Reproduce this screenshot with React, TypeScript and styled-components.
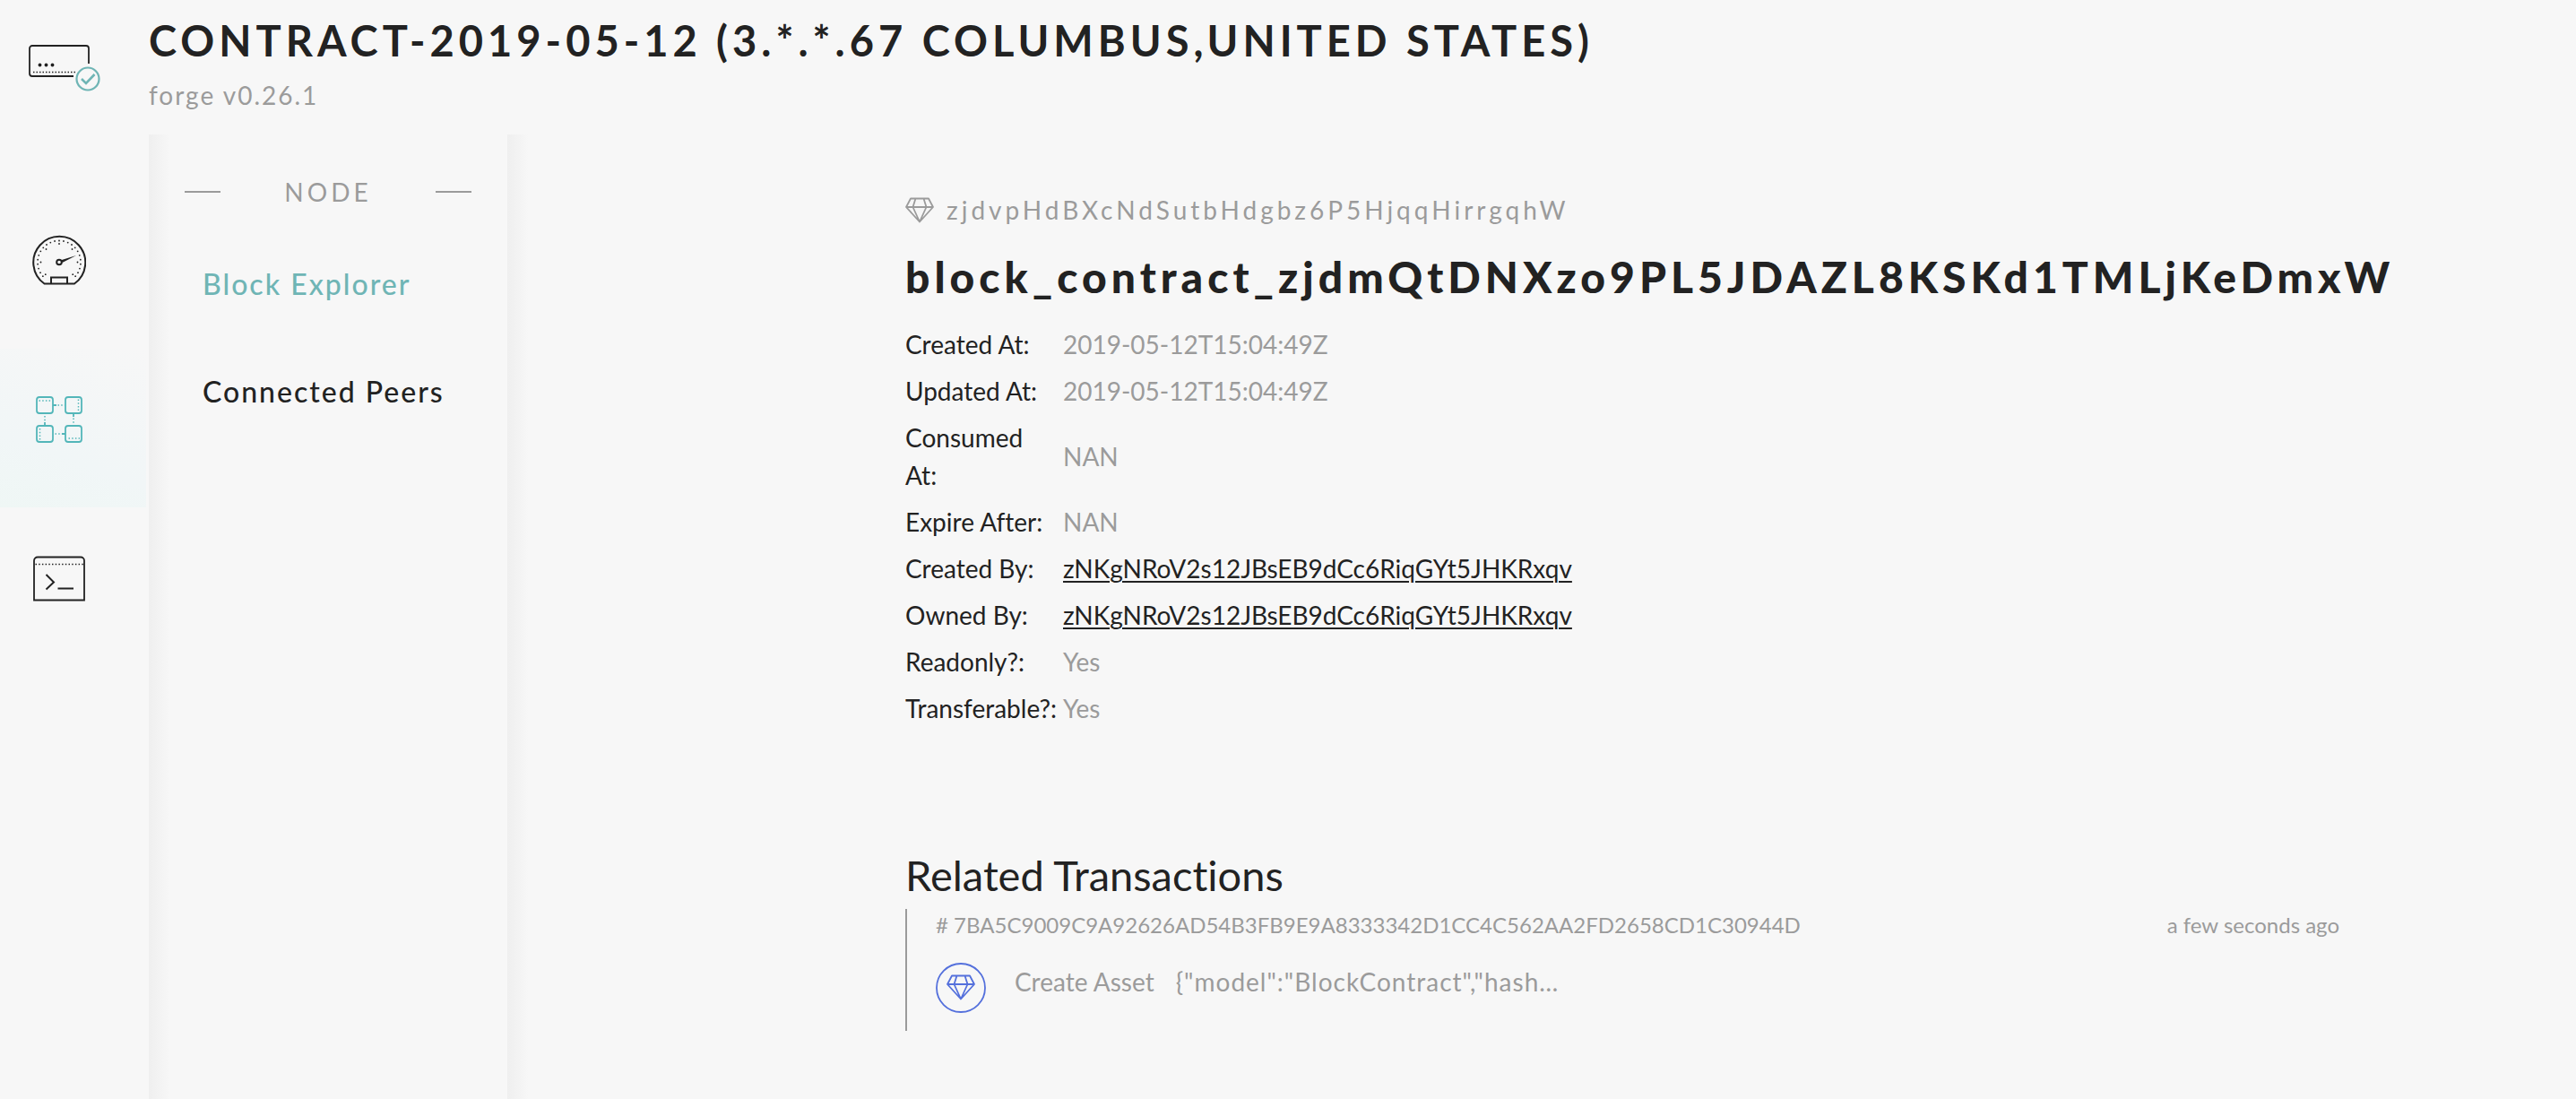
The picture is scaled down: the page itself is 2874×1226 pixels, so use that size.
import React from "react";
import styled, { createGlobalStyle } from "styled-components";

const ink = "#222222";
const muted = "#9b9b9b";
const teal = "#6fb5b5";
const page = "#f7f7f7";

const GlobalStyle = createGlobalStyle`
  *, *::before, *::after { box-sizing: border-box; }
  body {
    margin: 0;
    background: ${page};
    color: ${ink};
    font-family: Lato, "Liberation Sans", sans-serif;
    font-size: 28px;
    line-height: 42px;
    font-variant-ligatures: none;
  }
  h1, h2, h3, p, dl, dd, ul { margin: 0; padding: 0; font-weight: inherit; }
  ul { list-style: none; }
  a { color: inherit; text-decoration: none; }
`;

const Shell = styled.div`
  display: grid;
  grid-template-columns: 166px minmax(0, 1fr);
  grid-template-rows: 150px 1fr;
  min-height: 100vh;
`;

const Brand = styled.a`
  padding: 48px 0 0 31px;
  svg { display: block; }
`;

const Header = styled.header`
  padding-top: 15px;
`;

const PageTitle = styled.h1`
  font-size: 47px;
  line-height: 60px;
  font-weight: 700;
  letter-spacing: 5px;
  text-transform: uppercase;
  white-space: nowrap;
`;

const Version = styled.p`
  margin-top: 10px;
  color: ${muted};
  letter-spacing: 2px;
`;

const Rail = styled.nav`
  padding-top: 62px;
`;

const RailLink = styled.a<{ $active?: boolean }>`
  display: block;
  height: 177px;
  margin-right: 3px;
  padding: 48px 0 0 36px;
  color: ${(p) => (p.$active ? "#53b6b9" : ink)};
  background: ${(p) =>
    p.$active ? "linear-gradient(20deg, #eff7f5, #f1f6f7 35%, #f7f7f7)" : "none"};
  svg { display: block; }
`;

const Body = styled.div`
  display: grid;
  grid-template-columns: 400px minmax(0, 1fr);
`;

const shade = "linear-gradient(to right, #efefef, #f7f7f7) no-repeat left / 24px 100%";

const Menu = styled.nav`
  padding: 43px 40px 0;
  background: ${shade};
`;

const MenuTitle = styled.h2`
  display: flex;
  align-items: center;
  justify-content: space-between;
  color: ${muted};
  font-size: 28px;
  letter-spacing: 4px;
  &::before, &::after {
    content: "";
    width: 40px;
    height: 2px;
    background: ${muted};
  }
`;

const MenuLink = styled.a<{ $active?: boolean }>`
  display: block;
  padding: 36px 20px;
  font-size: 32px;
  line-height: 48px;
  font-weight: 500;
  letter-spacing: 2px;
  white-space: nowrap;
  color: ${(p) => (p.$active ? teal : ink)};
`;

const MenuList = styled.ul`
  padding-top: 22px;
`;

const Main = styled.main`
  display: flex;
  justify-content: center;
  padding: 63px 0 0 180px;
  background: ${shade};
`;

const Content = styled.article`
  width: 100%;
  max-width: 1600px;
`;

const Address = styled.p`
  display: flex;
  align-items: center;
  gap: 14px;
  color: ${muted};
  letter-spacing: 4px;
`;

const AssetName = styled.h2`
  margin: 24px 0;
  font-size: 48px;
  line-height: 60px;
  font-weight: 900;
  letter-spacing: 5px;
  white-space: nowrap;
`;

const Facts = styled.dl`
  display: flex;
  flex-direction: column;
  gap: 10px;
`;

const Fact = styled.div`
  display: flex;
  align-items: center;
`;

const Term = styled.dt`
  flex: none;
  width: 176px;
  padding-right: 8px;
`;

const Value = styled.dd`
  color: ${muted};
`;

const AccountLink = styled.a`
  color: ${ink};
  text-decoration: underline;
  text-decoration-thickness: 2px;
  text-underline-offset: 3px;
`;

const SectionTitle = styled.h3`
  margin: 135px 0 8px;
  font-size: 47px;
  line-height: 60px;
`;

const Transaction = styled.section`
  height: 136px;
  padding-left: 32px;
  border-left: 2px solid ${muted};
  color: ${muted};
`;

const TransactionHead = styled.div`
  display: flex;
  justify-content: space-between;
  font-size: 24px;
  line-height: 36px;
`;

const TransactionBody = styled.div`
  display: flex;
  gap: 32px;
  margin-top: 24px;
  svg { flex: none; }
`;

const Kind = styled.span`
  margin-right: 24px;
`;

const Payload = styled.span`
  letter-spacing: 1px;
`;

const gemPath = "M6 1.5H26L31 11L16 27.5L1 11ZM1 11H31M11.500 1.500L8.500 11L16 27.500L23.500 11L20.500 1.500";

const GemIcon = () => (
  <svg width="32" height="29" viewBox="0 0 32 29" fill="none" stroke="currentColor" strokeWidth="1.800" strokeLinejoin="round" aria-hidden="true">
    <path d={gemPath} />
  </svg>
);

const GemBadge = () => (
  <svg width="56" height="56" viewBox="0 0 56 56" fill="none" stroke="#5470dc" strokeWidth="1.800" strokeLinejoin="round" aria-hidden="true">
    <circle cx="28" cy="28" r="27" />
    <path d={gemPath} transform="translate(12 13)" />
  </svg>
);

const NodeLogo = () => (
  <svg width="82" height="56" viewBox="0 0 82 56" fill="none" strokeWidth="1.8" aria-hidden="true">
    <path d="M68 23V6a3 3 0 0 0-3-3H5a3 3 0 0 0-3 3v28a3 3 0 0 0 3 3h46" stroke={ink} />
    <g fill={ink}>
      <circle cx="13.500" cy="24.500" r="1.900" />
      <circle cx="20.500" cy="24.500" r="1.900" />
      <circle cx="27.500" cy="24.500" r="1.900" />
    </g>
    <path d="M6 32.500H53" stroke={ink} strokeWidth="1.500" strokeDasharray="1.500 2" />
    <circle cx="67" cy="40" r="12.500" stroke={teal} strokeWidth="2.200" />
    <path d="M60 40l5 5 9.500-10" stroke={teal} strokeWidth="2.600" />
  </svg>
);

const ticks = Array.from({ length: 23 }, (_, i) => ((i - 11) * 11.9 * Math.PI) / 180);
const innerTicks = [-132, -90, -45, 0, 45, 90, 132].map((d) => (d * Math.PI) / 180);

const GaugeIcon = () => (
  <svg width="60" height="60" viewBox="0 0 60 60" fill="none" stroke="currentColor" strokeWidth="2" aria-hidden="true">
    <path d="M13.500 56.500A29 29 0 1 1 47 56.500Z" strokeLinejoin="round" />
    <path d="M21 56V49.500H39V56" />
    <circle cx="30" cy="32.500" r="2.800" />
    <path d="M32 30.200L49 25L33.500 33Z" fill="currentColor" stroke="none" />
    <g fill="currentColor" stroke="none">
      {ticks.map((a) => (
        <circle key={a} cx={30 + 24 * Math.sin(a)} cy={32.5 - 24 * Math.cos(a)} r="0.900" />
      ))}
      {innerTicks.map((a) => (
        <circle key={a} cx={30 + 20.5 * Math.sin(a)} cy={32.5 - 20.5 * Math.cos(a)} r="0.900" />
      ))}
    </g>
  </svg>
);

const BlocksIcon = () => (
  <svg width="60" height="60" viewBox="0 0 60 60" fill="none" stroke="currentColor" strokeWidth="1.800" aria-hidden="true">
    <rect x="5" y="6" width="18" height="18" rx="3" />
    <rect x="37" y="6" width="18" height="18" rx="3" />
    <rect x="5" y="38" width="18" height="18" rx="3" />
    <rect x="37" y="38" width="18" height="18" rx="3" />
    <path d="M23 15H27M46 24V28M14 38V34M37 47H33" />
    <path
      d="M28.500 15H36M46 29.500V36M14 27V33M25.500 47H33M7.500 10H21M51.500 8.500V22M8.500 41V54M40.500 52H53"
      strokeWidth="1.500"
      strokeDasharray="1.500 2.200"
    />
  </svg>
);

const TerminalIcon = () => (
  <svg width="60" height="60" viewBox="0 0 60 60" fill="none" stroke="currentColor" strokeWidth="1.800" aria-hidden="true">
    <path d="M2 55.500V11.500a4 4 0 0 1 4-4H54a4 4 0 0 1 4 4V55.500Z" />
    <path d="M3.500 15.500H57" strokeWidth="1.500" strokeDasharray="1.500 2.200" />
    <path d="M15.500 27L24 35.500L15.500 43.500M28.500 42.500H46" strokeWidth="2" />
  </svg>
);

const facts: { term: string; value: string; account?: boolean }[] = [
  { term: "Created At:", value: "2019-05-12T15:04:49Z" },
  { term: "Updated At:", value: "2019-05-12T15:04:49Z" },
  { term: "Consumed At:", value: "NAN" },
  { term: "Expire After:", value: "NAN" },
  { term: "Created By:", value: "zNKgNRoV2s12JBsEB9dCc6RiqGYt5JHKRxqv", account: true },
  { term: "Owned By:", value: "zNKgNRoV2s12JBsEB9dCc6RiqGYt5JHKRxqv", account: true },
  { term: "Readonly?:", value: "Yes" },
  { term: "Transferable?:", value: "Yes" },
];

export default function App() {
  return (
    <>
      <GlobalStyle />
      <Shell>
        <Brand href="#" aria-label="Node">
          <NodeLogo />
        </Brand>
        <Header>
          <PageTitle>Contract-2019-05-12 (3.*.*.67 Columbus,United States)</PageTitle>
          <Version>forge v0.26.1</Version>
        </Header>
        <Rail>
          <RailLink href="#dashboard" aria-label="Dashboard"><GaugeIcon /></RailLink>
          <RailLink href="#blocks" aria-label="Blocks" $active><BlocksIcon /></RailLink>
          <RailLink href="#console" aria-label="Console"><TerminalIcon /></RailLink>
        </Rail>
        <Body>
          <Menu>
            <MenuTitle>NODE</MenuTitle>
            <MenuList>
              <li><MenuLink href="#explorer" $active>Block Explorer</MenuLink></li>
              <li><MenuLink href="#peers">Connected Peers</MenuLink></li>
            </MenuList>
          </Menu>
          <Main>
            <Content>
              <Address><GemIcon />zjdvpHdBXcNdSutbHdgbz6P5HjqqHirrgqhW</Address>
              <AssetName>block_contract_zjdmQtDNXzo9PL5JDAZL8KSKd1TMLjKeDmxW</AssetName>
              <Facts>
                {facts.map((f) => (
                  <Fact key={f.term}>
                    <Term>{f.term}</Term>
                    <Value>
                      {f.account ? <AccountLink href="#account">{f.value}</AccountLink> : f.value}
                    </Value>
                  </Fact>
                ))}
              </Facts>
              <SectionTitle>Related Transactions</SectionTitle>
              <Transaction>
                <TransactionHead>
                  <span># 7BA5C9009C9A92626AD54B3FB9E9A8333342D1CC4C562AA2FD2658CD1C30944D</span>
                  <time>a few seconds ago</time>
                </TransactionHead>
                <TransactionBody>
                  <GemBadge />
                  <p>
                    <Kind>Create Asset</Kind>
                    <Payload>{'{"model":"BlockContract","hash…'}</Payload>
                  </p>
                </TransactionBody>
              </Transaction>
            </Content>
          </Main>
        </Body>
      </Shell>
    </>
  );
}
